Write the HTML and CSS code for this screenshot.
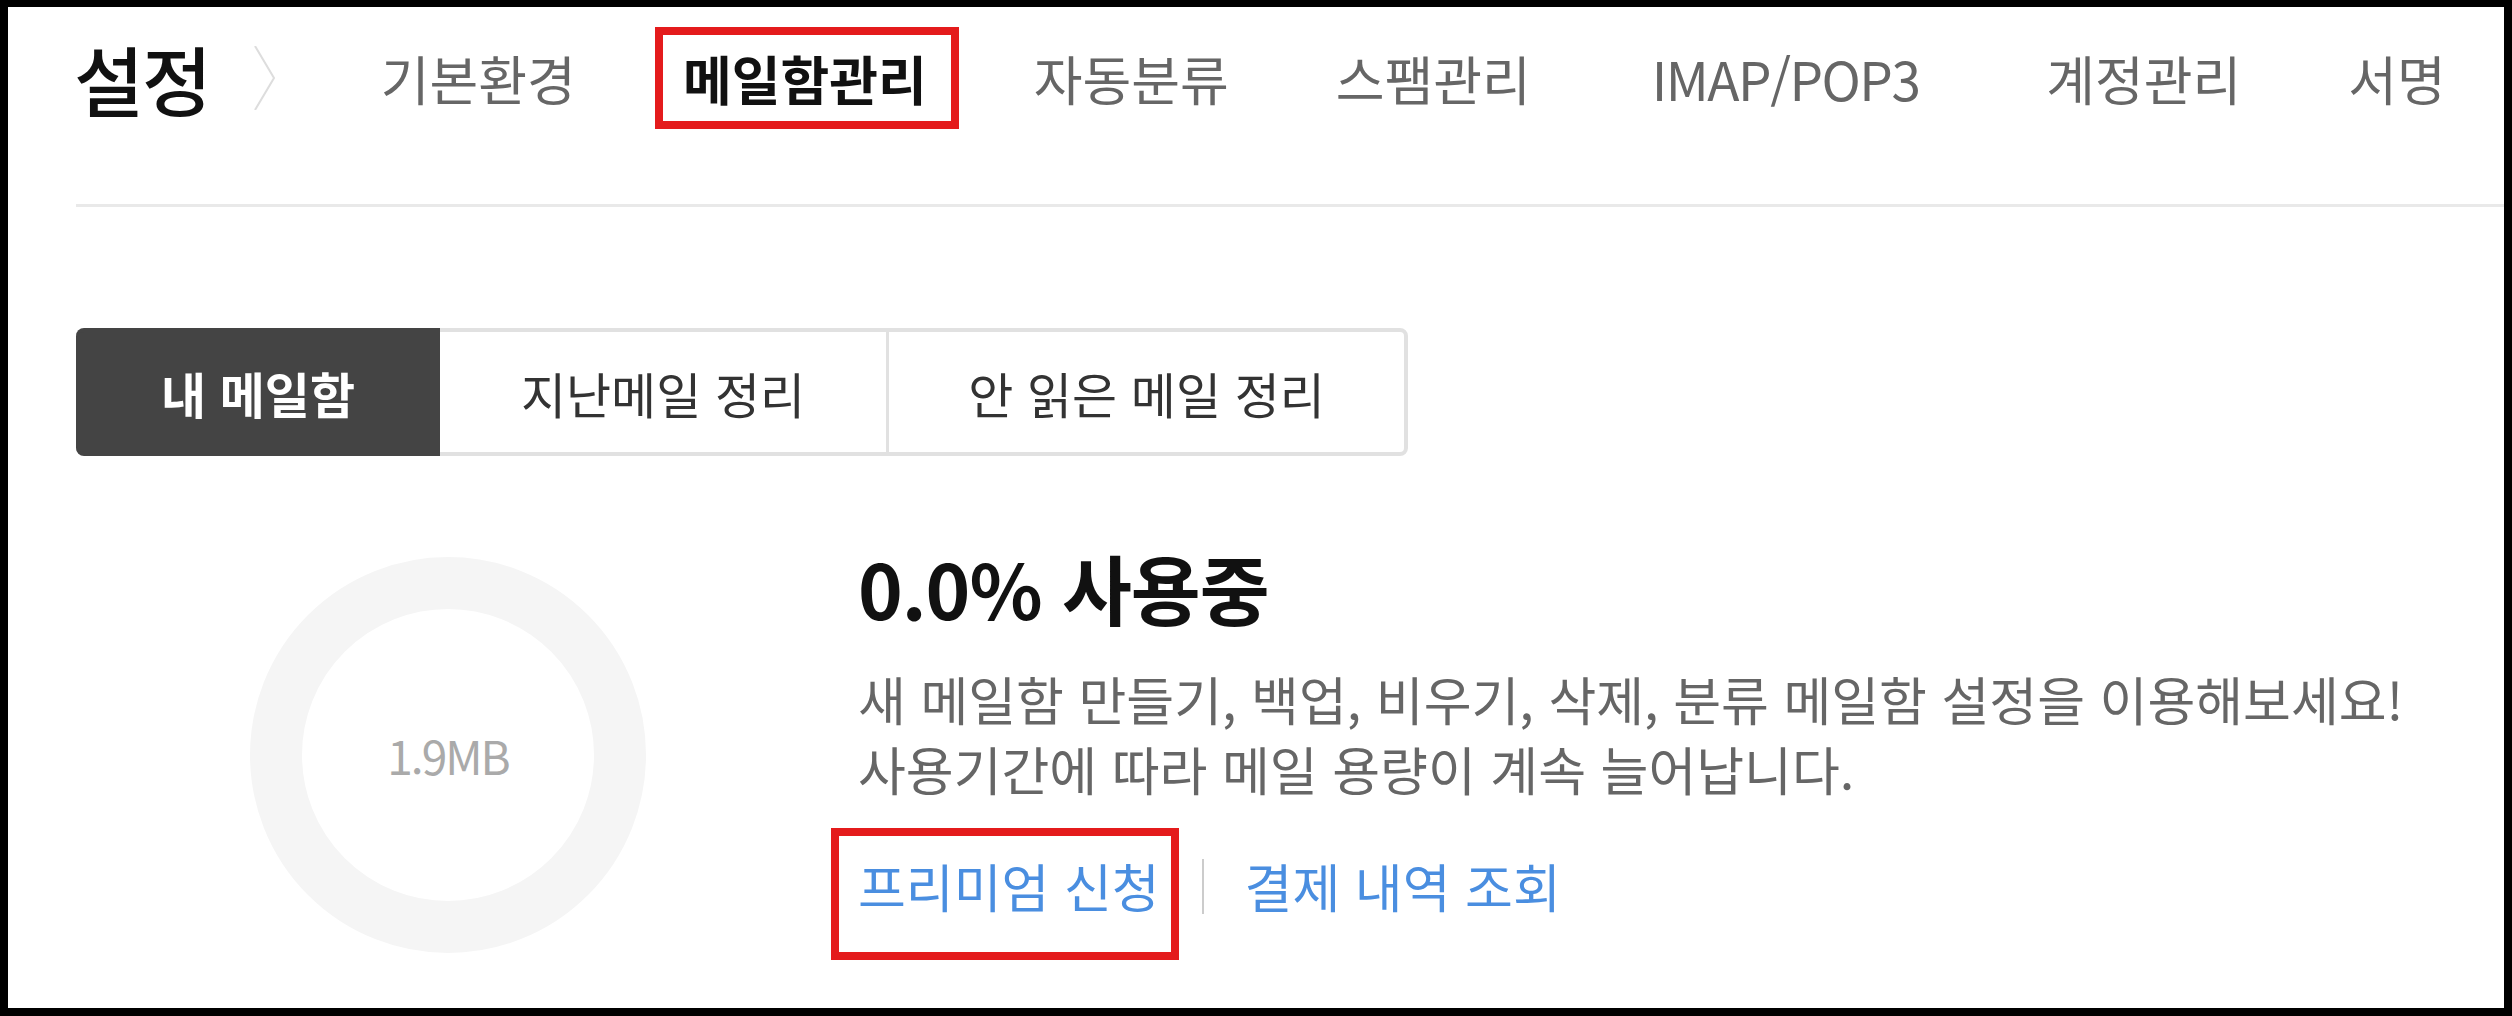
FILE: index.html
```html
<!DOCTYPE html>
<html lang="ko">
<head>
<meta charset="utf-8">
<title>설정 - 메일함관리</title>
<link rel="stylesheet" href="styles.css">
</head>
<body>
<div class="frame">
  <header class="topbar">
    <h1 class="title">설정</h1>
    <svg class="crumb" width="22" height="64" viewBox="0 0 22 64"><polyline points="1,0 20,32 1,64" fill="none" stroke="#dddddd" stroke-width="2"/></svg>
    <nav class="menu">
      <a class="menu-item">기본환경</a>
      <a class="menu-item active marked">메일함관리</a>
      <a class="menu-item">자동분류</a>
      <a class="menu-item">스팸관리</a>
      <a class="menu-item latin">IMAP/POP3</a>
      <a class="menu-item">계정관리</a>
      <a class="menu-item">서명</a>
    </nav>
  </header>
  <div class="divider"></div>
  <div class="content">
    <div class="segments">
      <a class="seg seg-on">내 메일함</a>
      <a class="seg seg-mid">지난메일 정리</a>
      <a class="seg seg-last">안 읽은 메일 정리</a>
    </div>
    <section class="usage">
      <div class="ring"><span class="ring-label">1.9MB</span></div>
      <div class="usage-text">
        <h2 class="usage-title">0.0% 사용중</h2>
        <p class="usage-desc">새 메일함 만들기, 백업, 비우기, 삭제, 분류 메일함 설정을 이용해보세요!<br>사용기간에 따라 메일 용량이 계속 늘어납니다.</p>
        <div class="links">
          <a class="link marked2">프리미엄 신청</a>
          <span class="sep"></span>
          <a class="link">결제 내역 조회</a>
        </div>
      </div>
    </section>
  </div>
</div>
</body>
</html>
```

FILE: styles.css
```css
html, body {
  margin: 0;
  padding: 0;
}
body {
  background: #000;
  width: 2512px;
  height: 1016px;
  overflow: hidden;
  font-family: "Noto Sans CJK KR", "Noto Sans", sans-serif;
}
.frame {
  margin: 7px 8px 0 8px;
  height: 1001px;
  background: #fff;
  overflow: hidden;
}
.topbar {
  height: 142px;
  display: flex;
  align-items: center;
  padding-left: 66px;
}
.title {
  margin: 0;
  font-size: 76px;
  line-height: 1;
  font-weight: 500;
  color: #111;
  letter-spacing: -2px;
}
.crumb {
  margin-left: 44px;
  margin-right: 105px;
  display: block;
}
.menu {
  display: flex;
  align-items: center;
  gap: 107px;
}
.menu-item {
  font-size: 53px;
  line-height: 1;
  color: #666;
  position: relative;
  white-space: nowrap;
}
.menu-item.latin {
  letter-spacing: -1.5px;
  margin-left: 14px;
  margin-right: 20px;
}
.menu-item.active {
  color: #111;
  font-weight: 700;
}
.marked::after {
  content: "";
  position: absolute;
  left: -28px;
  right: -32px;
  top: -25px;
  bottom: -24px;
  border: 8px solid #e41b1c;
}
.divider {
  margin-top: 55px;
  margin-left: 68px;
  height: 3px;
  background: #e9e9e9;
}
.content {
  padding-left: 68px;
}
.segments {
  margin-top: 121px;
  display: flex;
  height: 128px;
}
.seg {
  display: flex;
  align-items: center;
  justify-content: center;
  box-sizing: border-box;
  height: 128px;
  font-size: 49px;
  line-height: 1;
  color: #333;
  border-top: 4px solid #e1e1e1;
  border-bottom: 4px solid #e1e1e1;
  white-space: nowrap;
}
.seg-on {
  width: 364px;
  background: #444;
  color: #fff;
  font-weight: 700;
  border-color: #444;
  border-radius: 8px 0 0 8px;
}
.seg-mid {
  width: 446px;
}
.seg-last {
  width: 522px;
  border-left: 3px solid #e1e1e1;
  border-right: 4px solid #e1e1e1;
  border-radius: 0 8px 8px 0;
}
.usage {
  margin-top: 90px;
  display: flex;
  align-items: flex-start;
}
.ring {
  margin-top: 11px;
  margin-left: 174px;
  width: 396px;
  height: 396px;
  box-sizing: border-box;
  border: 52px solid #f5f5f5;
  border-radius: 50%;
  display: flex;
  align-items: center;
  justify-content: center;
}
.ring-label {
  font-size: 46px;
  color: #aaa;
  letter-spacing: -2px;
}
.usage-text {
  margin-left: 212px;
  padding-top: 3px;
}
.usage-title {
  margin: 0;
  font-size: 76px;
  line-height: 76px;
  font-weight: 700;
  color: #111;
  letter-spacing: -1px;
}
.usage-desc {
  margin: 39px 0 0 0;
  font-size: 52px;
  line-height: 70px;
  color: #666;
}
.links {
  margin-top: 47px;
  display: flex;
  align-items: center;
  font-size: 52px;
  line-height: 70px;
}
.link {
  color: #4a8ee0;
  position: relative;
  white-space: nowrap;
}
.sep {
  width: 2px;
  height: 55px;
  background: #cccccc;
  margin: 0 41px 0 42px;
}
.marked2::after {
  content: "";
  position: absolute;
  left: -27px;
  right: -19px;
  top: -23px;
  bottom: -39px;
  border: 8px solid #e41b1c;
}
```
